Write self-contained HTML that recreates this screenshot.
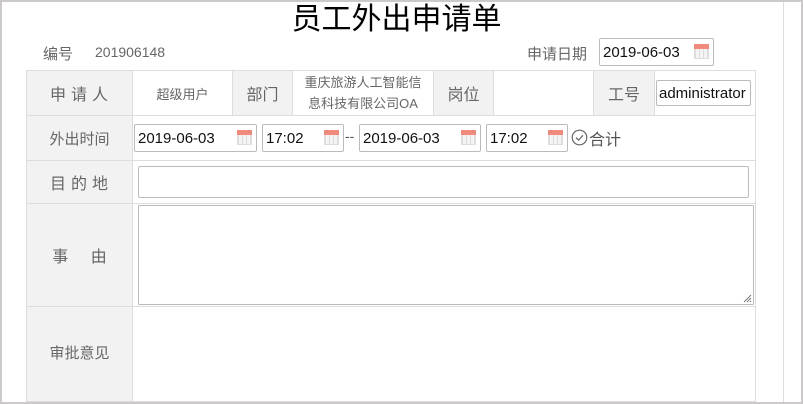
<!DOCTYPE html>
<html><head><meta charset="utf-8"><style>
*{margin:0;padding:0;box-sizing:border-box}
body{width:803px;height:404px;overflow:hidden;background:#fff;position:relative;font-family:"Liberation Sans","Noto Sans CJK SC",sans-serif;color:#666}
.a{position:absolute}
.frame{left:0;top:0;width:803px;height:404px;border:2px solid #cdc9ca}
.vl{left:783px;top:2px;width:1px;height:400px;background:#ddd}
.c{position:absolute;border:1px solid #ddd;display:flex;align-items:center;justify-content:center;text-align:center}
.g{background:#f2f2f2}
.in{position:absolute;border:1px solid #bbb;border-radius:2px;background:#fff;color:#111;font-size:15px;padding-left:3px;display:flex;align-items:center}
.cal{position:absolute;right:4px;top:50%;margin-top:-8px;width:15px;height:15px;border:1px solid #ddd;background:repeating-linear-gradient(90deg,#ddd 0 1px,#f4f4f4 1px 4px)}
.cal:before{content:"";position:absolute;left:-1px;top:-1px;width:15px;height:5px;background:#f08a7c}
</style></head><body>
<div class="a frame"></div>
<div class="a vl"></div>
<div class="a" style="left:0;width:793px;top:1px;text-align:center;font-size:30px;color:#000;line-height:38px">员工外出申请单</div>
<div class="a" style="left:43px;top:43px;font-size:15px">编号</div>
<div class="a" style="left:95px;top:44px;font-size:14px">201906148</div>
<div class="a" style="left:527px;top:43px;font-size:15px">申请日期</div>
<div class="in" style="left:599px;top:38px;width:115px;height:28px">2019-06-03<span class="cal"></span></div>

<div class="c g" style="left:26px;top:70px;width:107px;height:46px;font-size:16px;letter-spacing:5px;padding-left:4px">申请人</div>
<div class="c" style="left:132px;top:70px;width:101px;height:46px;font-size:13px">超级用户</div>
<div class="c g" style="left:232px;top:70px;width:61px;height:46px;font-size:16px">部门</div>
<div class="c" style="left:292px;top:70px;width:142px;height:46px;font-size:13px;line-height:21px">重庆旅游人工智能信<br>息科技有限公司OA</div>
<div class="c g" style="left:433px;top:70px;width:61px;height:46px;font-size:16px">岗位</div>
<div class="c" style="left:493px;top:70px;width:101px;height:46px"></div>
<div class="c g" style="left:593px;top:70px;width:62px;height:46px;font-size:16px">工号</div>
<div class="c" style="left:654px;top:70px;width:102px;height:46px"></div>
<div class="in" style="left:656px;top:80px;width:95px;height:26px;padding-left:2px;font-size:15px">administrator</div>

<div class="c g" style="left:26px;top:115px;width:107px;height:46px;font-size:15px">外出时间</div>
<div class="c" style="left:132px;top:115px;width:624px;height:46px"></div>
<div class="in" style="left:134px;top:124px;width:123px;height:28px">2019-06-03<span class="cal"></span></div>
<div class="in" style="left:262px;top:124px;width:82px;height:28px">17:02<span class="cal"></span></div>
<div class="a" style="left:345px;top:128px;font-size:14px;color:#555">--</div>
<div class="in" style="left:359px;top:124px;width:122px;height:28px">2019-06-03<span class="cal"></span></div>
<div class="in" style="left:486px;top:124px;width:82px;height:28px">17:02<span class="cal"></span></div>
<svg class="a" style="left:571px;top:129px" width="17" height="17" viewBox="0 0 17 17"><circle cx="8.5" cy="8.5" r="7.3" fill="none" stroke="#666" stroke-width="1.2"/><path d="M5 8.7l2.5 2.4 4.5-4.8" fill="none" stroke="#666" stroke-width="1.2"/></svg>
<div class="a" style="left:589px;top:126px;font-size:16px;color:#555">合计</div>

<div class="c g" style="left:26px;top:160px;width:107px;height:44px;font-size:16px;letter-spacing:5px;padding-left:4px">目的地</div>
<div class="c" style="left:132px;top:160px;width:624px;height:44px"></div>
<div class="in" style="left:138px;top:166px;width:611px;height:32px"></div>

<div class="c g" style="left:26px;top:203px;width:107px;height:104px;font-size:16px;word-spacing:18px">事 由</div>
<div class="c" style="left:132px;top:203px;width:624px;height:104px"></div>
<div class="in" style="left:138px;top:205px;width:616px;height:100px;border-radius:1px"></div>
<svg class="a" style="left:743px;top:294px" width="9" height="9"><path d="M1 8L8 1M4 8L8 4M7 8L8 7" stroke="#777" stroke-width="1"/></svg>

<div class="c g" style="left:26px;top:306px;width:107px;height:96px;font-size:15px;padding-bottom:4px">审批意见</div>
<div class="c" style="left:132px;top:306px;width:624px;height:96px"></div>
<div class="a" style="left:0;top:402px;width:803px;height:2px;background:#cdc9ca"></div>
</body></html>
